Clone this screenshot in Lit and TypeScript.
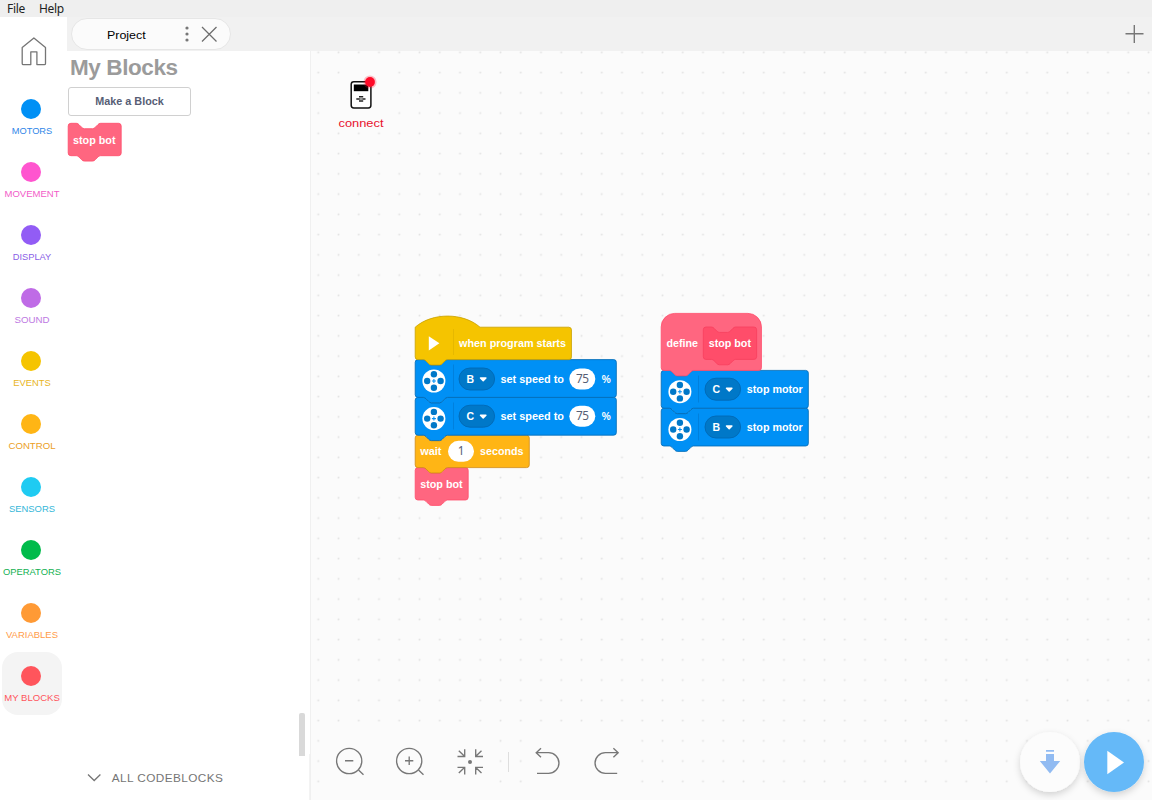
import { LitElement, html, svg, css } from "lit";
import { customElement } from "lit/decorators.js";

const U = 0.675;

const categories = [
  { name: "MOTORS", color: "#0090f5", text: "#2f86e8", w: 40.5 },
  { name: "MOVEMENT", color: "#ff55cf", text: "#f25cc8", w: 55 },
  { name: "DISPLAY", color: "#925cf5", text: "#8a5fe6", w: 38.5 },
  { name: "SOUND", color: "#bf6be6", text: "#bd78e2", w: 35 },
  { name: "EVENTS", color: "#f5c400", text: "#e8b51c", w: 37.5 },
  { name: "CONTROL", color: "#ffb515", text: "#eba01f", w: 47 },
  { name: "SENSORS", color: "#1fcbf2", text: "#33b6d8", w: 46 },
  { name: "OPERATORS", color: "#00bb4b", text: "#12b052", w: 58 },
  { name: "VARIABLES", color: "#ff9a35", text: "#ff9b48", w: 52 },
  { name: "MY BLOCKS", color: "#ff555c", text: "#ff555c", w: 55.5 },
];

const NOTCH = "c2,0 3,1 4,2 l4,4 c1,1 2,2 4,2 h12 c2,0 3,-1 4,-2 l4,-4 c1,-1 2,-2 4,-2";
const BUMP = "c-2,0 -3,1 -4,2 l-4,4 c-1,1 -2,2 -4,2 h-12 c-2,0 -3,-1 -4,-2 l-4,-4 c-1,-1 -2,-2 -4,-2";
const bottom = (w: number, h: number) =>
  `V${h - 4} a4,4 0 0,1 -4,4 H48 ${BUMP} H4 a4,4 0 0,1 -4,-4 z`;

const stackPath = (w: number, h: number) =>
  `M0,4 A4,4 0 0,1 4,0 H12 ${NOTCH} H${w - 4} a4,4 0 0,1 4,4 ${bottom(w, h)}`;
const hatPath = (w: number, h: number) =>
  `M0,0 c25,-22 71,-22 96,0 H${w - 4} a4,4 0 0,1 4,4 ${bottom(w, h)}`;
const definePath = (w: number, h: number) =>
  `M0,20 a20,20 0 0,1 20,-20 H${w - 20} a20,20 0 0,1 20,20 ${bottom(w, h)}`;

const shape = (d: string, x: number, y: number, fill: string, stroke: string) => svg`
  <path d=${d} transform="translate(${x} ${y}) scale(${U})" fill=${fill} stroke=${stroke} stroke-width="1.2"></path>`;

const label = (t: string, x: number, y: number, w: number) => svg`
  <text class="label" x=${x} y=${y} textLength=${w} lengthAdjust="spacingAndGlyphs">${t}</text>`;

const rule = (x: number, y: number, h: number, c: string) => svg`
  <path d="M${x} ${y}v${h}" stroke=${c} stroke-width="1"></path>`;

const reel = (cx: number, cy: number) => svg`
  <g transform="translate(${cx} ${cy})">
    <circle r="11.5" fill="#fff"></circle>
    <g fill="#0078c8">
      <circle cy="-6.7" r="3.2"></circle><circle cy="6.7" r="3.2"></circle>
      <circle cx="-6.7" r="3.2"></circle><circle cx="6.7" r="3.2"></circle>
    </g>
    <path d="M-2 0h4M0 -2v4" stroke="#0090f5" stroke-width="1.1"></path>
  </g>`;

const port = (t: string, x: number, cy: number) => svg`
  <rect x=${x + 0.5} y=${cy - 11} width="35.6" height="22" rx="11" fill="#0078c8" stroke="#0069b4" stroke-width=".9"></rect>
  <text class="label" x=${x + 7.9} y=${cy + 4} textLength="7.6" lengthAdjust="spacingAndGlyphs">${t}</text>
  <path d="M${x + 22} ${cy - 1}h5.4l-2.7 2.7z" fill="#fff" stroke="#fff" stroke-width="1.5" stroke-linejoin="round"></path>`;

const field = (t: string, cx: number, cy: number) => svg`
  <rect x=${cx - 13} y=${cy - 10.5} width="26" height="21" rx="10.5" fill="#fff"></rect>
  <text class="num" x=${cx} y=${cy + 4} text-anchor="middle">${t}</text>`;

@customElement("category-item")
class CategoryItem extends LitElement {
  static properties = { item: { attribute: false }, active: { type: Boolean } };
  declare item: (typeof categories)[number];
  declare active: boolean;
  static styles = css`
    :host { display: block; height: 63px; }
    .box { box-sizing: border-box; width: 60px; height: 63px; margin-left: 2px; padding-top: 14px; border-radius: 16px; }
    .active { background: #f4f4f4; }
    .dot { width: 20px; height: 20px; border-radius: 50%; margin-left: 19px; }
    svg { display: block; width: 64px; height: 16px; margin: 4px 0 0 -2px; overflow: visible; }
    text { font: 9.7px "Liberation Sans", Arial, sans-serif; }
  `;
  render() {
    const c = this.item;
    return html`<div class="box ${this.active ? "active" : ""}">
      <div class="dot" style="background:${c.color}"></div>
      <svg><text x=${32 - c.w / 2} y="11" textLength=${c.w} lengthAdjust="spacingAndGlyphs" fill=${c.text}>${c.name}</text></svg>
    </div>`;
  }
}

@customElement("app-root")
class AppRoot extends LitElement {
  static styles = css`
    :host { display: flex; flex-direction: column; width: 1152px; height: 800px; overflow: hidden; background: #fff; font-family: "Liberation Sans", Arial, sans-serif; }
    svg { display: block; flex: none; }
    .menu { height: 17px; flex: none; background: #efefef; display: flex; gap: 14px; padding-left: 7px; font: 12px/17px "Noto Sans", "Open Sans", sans-serif; letter-spacing: -0.3px; color: #222; }
    .body { flex: 1; display: flex; min-height: 0; }
    .side { width: 67px; flex: none; }
    .home { margin: 20px 0 0 21px; }
    .cats { padding-top: 19px; }
    .main { flex: 1; display: flex; flex-direction: column; min-width: 0; }
    .tabs { height: 34px; flex: none; background: #f1f1f1; display: flex; justify-content: space-between; }
    .tab { box-sizing: border-box; width: 160px; height: 32px; margin: 1px 0 0 4px; border: 1px solid #e6e6e6; border-radius: 16px; background: #fbfbfb; }
    .plus { margin: 8px 8px 0 0; }
    .content { flex: 1; display: flex; min-height: 0; }
    .flyout { position: relative; box-sizing: border-box; width: 243px; flex: none; display: flex; flex-direction: column; background: #fff; }
    h1 { margin: 0 0 0 3px; font-size: 22.5px; line-height: 33px; height: 36px; color: #9b9b9b; letter-spacing: -0.4px; white-space: nowrap; }
    .make { box-sizing: border-box; width: 123px; height: 29px; margin-left: 1px; border: 1px solid #d0d0d0; border-radius: 3px; background: #fff; }
    .palette { margin-top: 6px; flex: 1; }
    .thumb { position: absolute; left: 232px; top: 662px; width: 6px; height: 43px; border-radius: 2px 2px 0 0; background: #d9d9d9; }
    .all { height: 46px; flex: none; box-shadow: inset -1px 0 #f3f3f3; }
    .work { position: relative; flex: 1; background: #fbfbfb; border-left: 1px solid #f0f0f0; }
    .canvas { position: absolute; left: -1px; top: 0; }
    text { font-family: "Liberation Sans", Arial, sans-serif; }
    .label { font-size: 11.6px; font-weight: bold; fill: #fff; }
    .num { font: 11.8px "Noto Sans", sans-serif; letter-spacing: -0.4px; fill: #575e75; }
    .connect { font: 11.4px "Liberation Sans", Arial, sans-serif; fill: #e8102c; }
  `;

  renderScripts() {
    const Y = "#f5c400", YS = "#c9a100", B = "#0090f5", BS = "#0069b4", O = "#ffb515", OS = "#cf8b17", P = "#ff6680", PS = "#ff4d6a";
    return svg`
      ${shape(stackPath(78.5, 48), 415.2, 467.6, P, PS)}
      ${label("stop bot", 420.2, 488, 42.5)}
      ${shape(stackPath(169, 48), 415.2, 435.2, O, OS)}
      ${label("wait", 420.2, 455, 21.3)}
      ${field("1", 461, 451.3)}
      ${label("seconds", 480, 455, 43.5)}
      ${shape(stackPath(298, 56), 415.2, 397.4, B, BS)}
      ${reel(433.9, 418.6)}${rule(453.5, 402.5, 27, "#0080dd")}
      ${port("C", 458.5, 416.2)}
      ${label("set speed to", 500.5, 420, 63.5)}
      ${field("75", 582.3, 416.2)}${label("%", 601.7, 420, 9)}
      ${shape(stackPath(298, 56), 415.2, 359.6, B, BS)}
      ${reel(433.9, 381)}${rule(453.5, 364.5, 27, "#0080dd")}
      ${port("B", 458.5, 379)}
      ${label("set speed to", 500.5, 383, 63.5)}
      ${field("75", 582.3, 379)}${label("%", 601.7, 383, 9)}
      ${shape(hatPath(231.5, 48), 415.2, 327.2, Y, YS)}
      <path d="M428.8 336.2v14.2l10.6-7.1z" fill="#fff"></path>
      ${rule(453.5, 329, 26, "#e6b800")}
      ${label("when program starts", 459, 347, 107)}

      ${shape(stackPath(218, 56), 661.2, 408.2, B, BS)}
      ${reel(679.9, 429.5)}${rule(698.5, 413.5, 27, "#0080dd")}
      ${port("B", 704.5, 427)}${label("stop motor", 746.8, 431, 56)}
      ${shape(stackPath(218, 56), 661.2, 370.4, B, BS)}
      ${reel(679.9, 391.7)}${rule(698.5, 375.5, 27, "#0080dd")}
      ${port("C", 704.5, 389.2)}${label("stop motor", 746.8, 393, 56)}
      ${shape(definePath(148.5, 84.5), 661.2, 313.4, P, PS)}
      ${label("define", 666.5, 347, 31.5)}
      ${shape(stackPath(79, 48), 703.3, 327, "#ff4d6a", "#f83f5e")}
      ${label("stop bot", 708.7, 347, 42.3)}
    `;
  }

  renderTools() {
    return svg`
      <g fill="none" stroke="#777" stroke-width="1.35">
        <circle cx="349.2" cy="761" r="12.6"></circle><path d="M345 760.7h8.3M358.5 770l5 4.7"></path>
        <circle cx="409.2" cy="761" r="12.6"></circle><path d="M405 760.7h8.3M409.2 756.5v8.4M418.5 770l5 4.7"></path>
        <path d="M457.5 756.5h7.2v-7.2M458.8 750.8l5.7 5.5M483 756.5h-7.3v-7.2M481.5 750.8l-5.7 5.5M457.5 767.3h7.2v7.2M458.8 773l5.7-5.5M483 767.3h-7.3v7.2M481.5 773l-5.7-5.5"></path>
        <path d="M541 748.2l-4.8 4.5 4.8 4.6M536.2 752.6h12.4a10.4 10.4 0 0 1 0 20.8h-11.6"></path>
        <path d="M613.4 748.2l4.8 4.5-4.8 4.6M618.2 752.6h-12.8a10.4 10.4 0 0 0 0 20.8h11.8"></path>
      </g>
      <circle cx="470" cy="762" r="2" fill="#777"></circle>
      <path d="M508.5 752v20" stroke="#dedede"></path>`;
  }

  render() {
    return html`
      <div class="menu"><span>File</span><span>Help</span></div>
      <div class="body">
        <nav class="side">
          <svg class="home" width="26" height="29" fill="none" stroke="#757575" stroke-width="1.3"><path d="M12.9 .9L1.2 10.6V26.4a1.2 1.2 0 0 0 1.2 1.2H9.8V14.8H15.9V27.6H23.3a1.2 1.2 0 0 0 1.2-1.2V10.6z" stroke-linejoin="round"></path></svg>
          <div class="cats">${categories.map((c, i) => html`<category-item .item=${c} ?active=${i === 9}></category-item>`)}</div>
        </nav>
        <div class="main">
          <div class="tabs">
            <div class="tab">
              <svg width="158" height="30"><text x="35" y="20.2" font-size="11.6" textLength="38.7" lengthAdjust="spacingAndGlyphs" fill="#000">Project</text>
                <g fill="#777"><circle cx="115" cy="9" r="1.6"></circle><circle cx="115" cy="15" r="1.6"></circle><circle cx="115" cy="21" r="1.6"></circle></g>
                <path d="M130 8l14.5 14.5M144.5 8L130 22.5" stroke="#6e6e6e" stroke-width="1.3"></path></svg>
            </div>
            <svg class="plus" width="19" height="19" stroke="#777" stroke-width="1.4"><path d="M.5 8.8h18M9.3 0v18"></path></svg>
          </div>
          <div class="content">
            <aside class="flyout">
              <h1>My Blocks</h1>
              <div class="make"><svg width="121" height="27"><text x="26.3" y="17" font-size="11.8" font-weight="bold" textLength="68.5" lengthAdjust="spacingAndGlyphs" fill="#575e75">Make a Block</text></svg></div>
              <svg class="palette" width="120" height="50">
                ${shape(stackPath(78.5, 48), 1.2, 1.3, "#ff6680", "#ff4d6a")}
                ${label("stop bot", 6, 22, 42.5)}
              </svg>
              <div class="all"><svg width="242" height="46"><path d="M21 20.5l6.2 6 6.2-6" fill="none" stroke="#757575" stroke-width="1.3"></path><text x="44.8" y="27.8" font-size="11.8" textLength="111" fill="#757575">ALL CODEBLOCKS</text></svg></div>
              <div class="thumb"></div>
            </aside>
            <section class="work">
              <svg class="canvas" width="842" height="749" viewBox="310 51 842 749">
                <defs>
                  <pattern id="grid" x="308.1" y="42.2" width="20.25" height="20.25" patternUnits="userSpaceOnUse"><rect x="9.3" y="9.3" width="1.7" height="1.7" fill="#e2e2e2"></rect></pattern>
                  <filter id="drop" x="-30%" y="-30%" width="160%" height="160%"><feDropShadow dx="0" dy="3" stdDeviation="3.5" flood-color="#000" flood-opacity=".16"></feDropShadow></filter>
                </defs>
                <rect x="310" y="51" width="842" height="749" fill="url(#grid)"></rect>
                <rect x="342" y="70" width="48" height="60" fill="#fbfbfb"></rect>
                <rect x="332" y="84" width="58" height="46" fill="#fbfbfb"></rect>
                <rect x="330" y="732" width="162" height="60" fill="#fbfbfb"></rect>
                <rect x="528" y="732" width="104" height="60" fill="#fbfbfb"></rect>
                <rect x="351.2" y="81.7" width="19.7" height="26.2" rx="2.6" fill="#fff" stroke="#111" stroke-width="1.5"></rect>
                <path d="M353.8 84.5h14.5v6.7h-14.5z" fill="#000"></path>
                <path d="M359 96.8h4.2M356.3 98.9h9.2M359 101.1h4.2" stroke="#222" stroke-width="1.5"></path>
                <rect x="359.7" y="97.8" width="2.9" height="2.2" fill="#999"></rect>
                <circle cx="370" cy="82" r="6.6" fill="#ff0a28" opacity=".25"></circle>
                <circle cx="370" cy="82" r="4.9" fill="#ff0a28"></circle>
                <text class="connect" x="338.5" y="127" textLength="45" lengthAdjust="spacingAndGlyphs">connect</text>
                ${this.renderScripts()}
                ${this.renderTools()}
                <circle cx="1050" cy="762" r="30" fill="#fcfcfc" filter="url(#drop)"></circle>
                <path d="M1046 750h8v1.8h-8zM1046 754h8v7h6.2l-10.2 12.5-10.2-12.5h6.2z" fill="#91bbf2"></path>
                <circle cx="1114" cy="762" r="30" fill="#65b9f8" filter="url(#drop)"></circle>
                <path d="M1107.3 750.8v23.4l16.7-11.7z" fill="#fff"></path>
              </svg>
            </section>
          </div>
        </div>
      </div>`;
  }
}
